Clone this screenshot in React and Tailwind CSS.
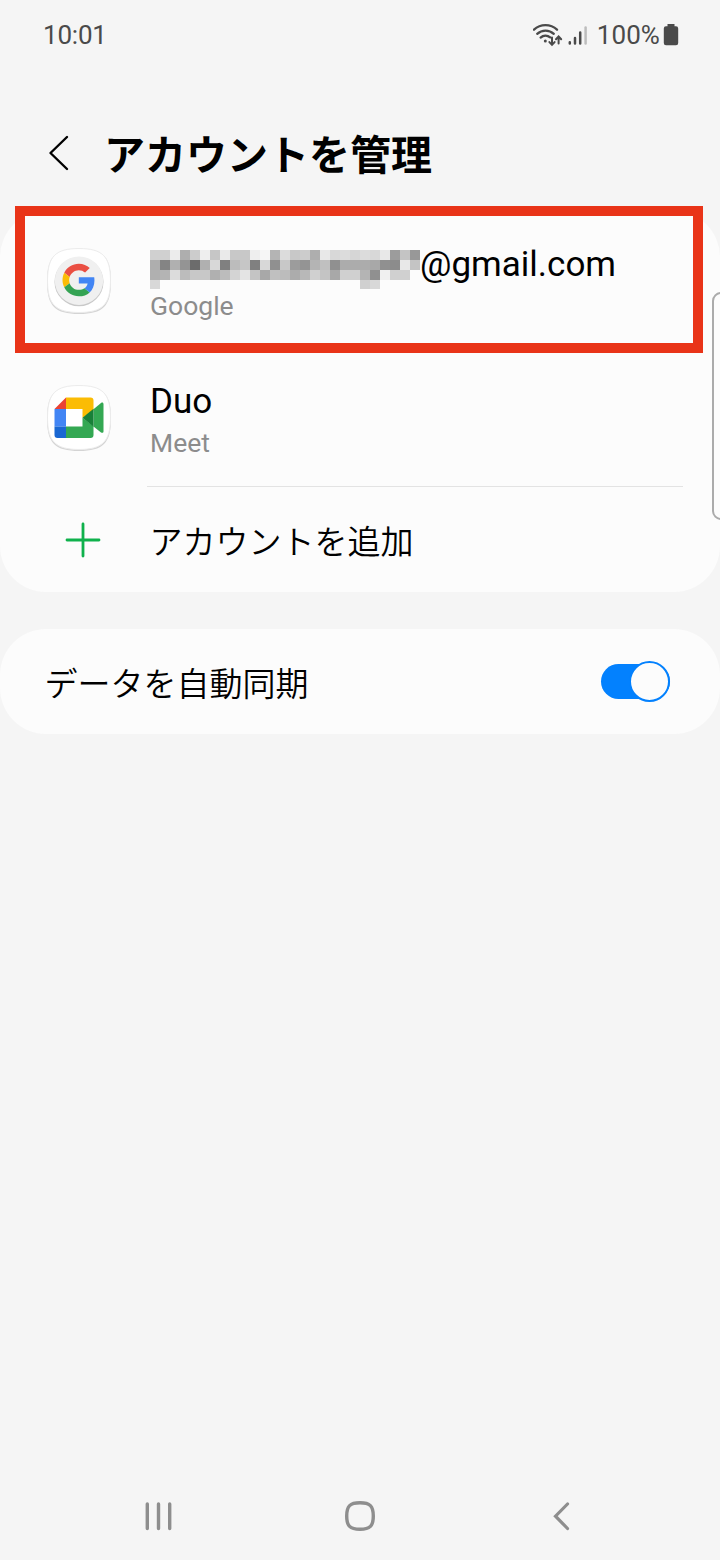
import { clsx } from "clsx";

const MASK_ROWS = [
  "d0 d0 ec ae cc ee c6 ea c8 c8 ee f6 b4 dc c8 cc ae e8 d8 dc d6 dc d8 e8 9c c4 98",
  "ae 84 b0 94 6c b0 d8 80 bc c6 80 d8 90 c8 9c 94 b4 c0 90 ac ac ac a8 90 8c e8 c4",
  "b0 b4 dc bc c8 c8 b0 bc d4 e4 c4 a8 c0 bc ac b8 d0 c4 a8 d0 d0 b4 90 f0 d0 d0 fc",
  "d8 fc fc fc fc fc fc fc fc fc fc fc fc fc fc fc fc fc fc fc fc d0 d8 fc fc fc fc",
].map((row) => row.split(" "));

function StatusBar() {
  return (
    <div className="flex h-[70px] items-center justify-between pl-[43px] pr-[41px] text-[26px] text-[#4a4a4a]">
      <span className="tracking-[-0.2px]">10:01</span>
      <div className="flex items-center">
        <svg className="h-[24px] w-[31px]" viewBox="0 0 31 24" fill="none" stroke="#4a4a4a" strokeWidth="2.3" strokeLinecap="round">
          <path d="M1 6.7a17 17 0 0 1 23 0" />
          <path d="M4.200 10.800a12.200 12.200 0 0 1 16.600 0" />
          <path d="M7.600 14.600a7.400 7.400 0 0 1 9.600-.2" />
          <circle cx="12.300" cy="18" r="1.500" fill="#4a4a4a" stroke="none" />
          <path d="M19 14.500v7M16.400 19.100l2.600 2.800 2.600-2.800M25.600 20.500v-6.500M23 16.300l2.600-2.800 2.600 2.800" strokeWidth="2" />
        </svg>
        <svg className="ml-[4px] h-[24px] w-[20px]" viewBox="0 0 20 24" strokeWidth="2.5" strokeLinecap="round">
          <path d="M1.800 19.200v1.400M7 15v5.600M12.200 9.500v11.100" stroke="#4a4a4a" />
          <path d="M17.600 4.500v16.100" stroke="#bdbdbd" />
        </svg>
        <span className="ml-[9px] tracking-[0.1px]">100%</span>
        <svg className="ml-[3px] h-[22px] w-[16px]" viewBox="0 0 16 22" fill="#4a4a4a">
          <path d="M4.500 0h7v2.200H13a2.200 2.200 0 0 1 2.200 2.200V19a2.200 2.200 0 0 1-2.200 2.200H3A2.200 2.200 0 0 1 .8 19V4.400A2.200 2.200 0 0 1 3 2.200h1.500z" />
        </svg>
      </div>
    </div>
  );
}

function GoogleIcon() {
  return (
    <svg className="mt-[2px] h-[70px] w-[68px]" viewBox="0 0 68 70">
      <path d="M34 3C58 3 66 11 66 35.500S58 68 34 68 2 60 2 35.500 10 3 34 3z" fill="#d4d4d4" />
      <path d="M34 2.500C57.500 2.500 65.500 10.500 65.500 34.500S57.500 66.500 34 66.500 2.500 58.500 2.500 34.500 10.500 2.500 34 2.500z" fill="#fff" stroke="#ececec" />
      <circle cx="34" cy="35.800" r="24.500" fill="#c9c9c9" />
      <circle cx="34" cy="34.700" r="24.200" fill="#f0f0f0" />
      <g transform="translate(17.500 17.700) scale(.68)">
        <path fill="#ea4f43" d="M24 9.500c3.540 0 6.710 1.220 9.210 3.600l6.850-6.850C35.900 2.380 30.470 0 24 0 14.620 0 6.510 5.380 2.560 13.220l7.980 6.190C12.430 13.720 17.740 9.500 24 9.500z" />
        <path fill="#4285f4" d="M46.980 24.550c0-1.570-.15-3.090-.38-4.550H24v9.020h12.940c-.58 2.960-2.260 5.480-4.780 7.180l7.730 6c4.510-4.180 7.090-10.360 7.090-17.650z" />
        <path fill="#fbbc05" d="M10.530 28.590c-.48-1.450-.76-2.990-.76-4.590s.27-3.140.76-4.590l-7.980-6.190C.92 16.460 0 20.120 0 24s.92 7.540 2.560 10.780z" />
        <path fill="#34a353" d="M24 48c6.480 0 11.930-2.130 15.890-5.810l-7.730-6c-2.150 1.450-4.920 2.300-8.160 2.300-6.260 0-11.570-4.220-13.470-9.910l-7.980 6.190C6.510 42.620 14.620 48 24 48z" />
      </g>
    </svg>
  );
}

function MeetIcon() {
  return (
    <svg className="mt-[2px] h-[70px] w-[68px]" viewBox="0 0 68 70">
      <path d="M34 3C58 3 66 11 66 35.500S58 68 34 68 2 60 2 35.500 10 3 34 3z" fill="#d4d4d4" />
      <path d="M34 2.500C57.500 2.500 65.500 10.500 65.500 34.500S57.500 66.500 34 66.500 2.500 58.500 2.500 34.500 10.500 2.500 34 2.500z" fill="#fff" stroke="#ececec" />
      <path d="M21 14.500v11.500H9.500z" fill="#ea4335" />
      <path d="M9.500 26H21v17.500H9.500z" fill="#4285f4" />
      <path d="M9.500 43.500H21V55h-8.500a3 3 0 0 1-3-3z" fill="#1967d2" />
      <path d="M21 14.500h24.500a3 3 0 0 1 3 3v9.800L37.500 34.700V26H21z" fill="#fbbc04" />
      <path d="M21 43.500h16.500v-8.800l11 8.500V52a3 3 0 0 1-3 3H21z" fill="#34a853" />
      <path d="M48.500 26.200l7.500-6.200c1.400-1 2.500-.3 2.500 1.200v27c0 1.500-1.100 2.200-2.500 1.200l-7.500-6z" fill="#34a853" />
      <path d="M37.500 34.700l11-9v18z" fill="#188038" />
    </svg>
  );
}

function MaskedName() {
  return (
    <div className="mt-[2px] w-[270px] shrink-0">
      {MASK_ROWS.map((row, y) => (
        <div key={y} className={clsx("flex", y === 3 ? "h-[9px]" : "h-[10px]")}>
          {row.map((c, x) => (
            <span key={x} className="w-[10px]" style={{ backgroundColor: `#${c}${c}${c}` }} />
          ))}
        </div>
      ))}
    </div>
  );
}

function AccountRow({ icon, title, subtitle }) {
  return (
    <div className="flex h-[137px] items-center pl-[45px]">
      {icon}
      <div className="ml-[37px] mt-[12px]">
        <div className="flex h-[41px] items-start text-[35px] leading-[34px] text-black">{title}</div>
        <div className="h-[35px] text-[26.5px] leading-[33px] text-[#8c8c8c]">{subtitle}</div>
      </div>
    </div>
  );
}

function NavBar() {
  return (
    <div className="mt-auto flex h-[88px] items-center pl-[143px]">
      <svg className="h-[32px] w-[32px]" viewBox="0 0 32 32" stroke="#8e8e8e" strokeWidth="3.4" strokeLinecap="round">
        <path d="M4.300 4v24.500M15.500 4v24.500M26.700 4v24.500" />
      </svg>
      <svg className="ml-[168.5px] h-[32px] w-[32px]" viewBox="0 0 32 32" fill="none" stroke="#8e8e8e" strokeWidth="3.4">
        <path d="M16 2.700C26 2.700 29.300 6 29.300 16S26 29.300 16 29.300 2.700 26 2.700 16 6 2.700 16 2.700z" />
      </svg>
      <svg className="ml-[175.5px] h-[32px] w-[20px]" viewBox="0 0 20 32" fill="none" stroke="#8e8e8e" strokeWidth="3.2" strokeLinecap="round">
        <path d="M16.500 4L4.500 16.200 16.500 28.500" />
      </svg>
    </div>
  );
}

export default function App() {
  return (
    <div className="relative flex h-[1560px] w-[720px] flex-col overflow-hidden bg-[#f5f5f5] font-[Roboto,'Noto_Sans_CJK_JP',sans-serif]">
      <StatusBar />
      <header className="flex h-[141px] items-center pl-[48px]">
        <svg className="mt-[24px] h-[36px] w-[22px]" viewBox="0 0 22 36" fill="none" stroke="#000" strokeWidth="2.4" strokeLinecap="round" strokeLinejoin="round">
          <path d="M19 2L2.500 18 19 34" />
        </svg>
        <h1 className="ml-[34px] mt-[31px] text-[41px] font-bold leading-[50px] text-black">アカウントを管理</h1>
      </header>

      <section className="relative h-[381px] rounded-[46px] bg-[#fcfcfc]">
        <AccountRow
          icon={<GoogleIcon />}
          title={
            <>
              <MaskedName />
              <span>@gmail.com</span>
            </>
          }
          subtitle="Google"
        />
        <AccountRow icon={<MeetIcon />} title="Duo" subtitle="Meet" />
        <div className="ml-[147px] mr-[37px] mt-px h-px bg-[#e3e3e3]" />
        <div className="flex h-[105px] items-center pl-[65px]">
          <svg className="h-[36px] w-[36px]" viewBox="0 0 36 36" stroke="#0fb14c" strokeWidth="2.8" strokeLinecap="round">
            <path d="M18 2v32M2 18h32" />
          </svg>
          <span className="ml-[48.5px] mt-[7px] text-[33px] font-[350] text-black">アカウントを追加</span>
        </div>
        <div className="absolute left-[15px] top-[-5px] h-[147px] w-[688px] border-[10px] border-[#e93418]" />
      </section>

      <section className="mt-[37px] flex h-[105px] items-center justify-between rounded-[46px] bg-[#fcfcfc] pl-[44.5px] pr-[50px]">
        <span className="mt-[7px] text-[33px] font-[350] text-black">データを自動同期</span>
        <div className="flex h-[35px] w-[69px] items-center justify-end rounded-full bg-[#0381fe]">
          <span className="h-[41px] w-[41px] shrink-0 rounded-full border-2 border-[#0381fe] bg-[#fcfcfc]" />
        </div>
      </section>

      <NavBar />
      <div className="absolute left-[711.5px] top-[292px] h-[228px] w-[20px] rounded-[9px] border-2 border-[#ababab] bg-[#fcfcfc]" />
    </div>
  );
}
